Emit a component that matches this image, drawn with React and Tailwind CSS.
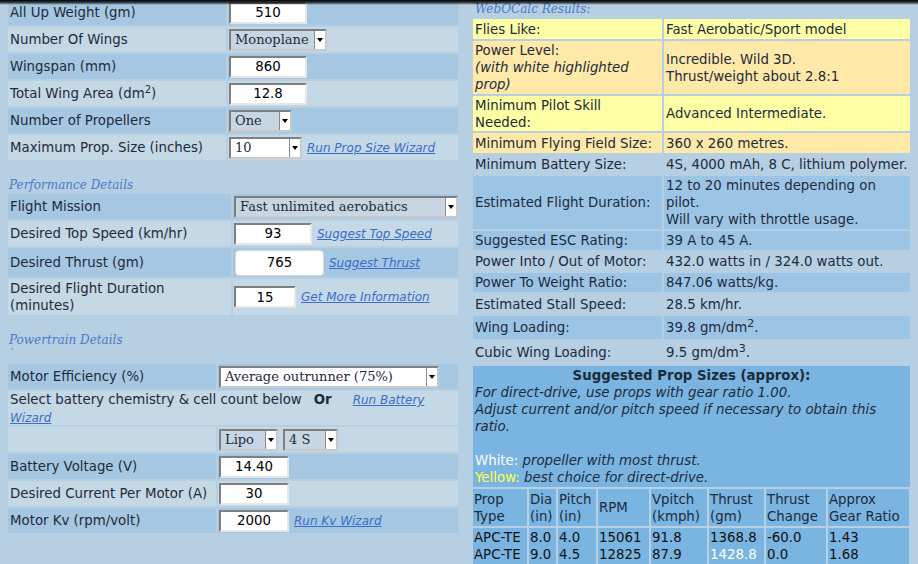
import React from 'react';

const DARK = 'bg-[#a5c7e1]';
const LIGHT = 'bg-[#c4d8e6]';

const Arrow = () => (
    <span className="flex w-[11px] items-center justify-center border-l border-[#8a8a8a] bg-white">
        <span className="h-0 w-0 border-x-[3px] border-t-[4px] border-x-transparent border-t-black" />
    </span>
);

const Select = ({ w, value, white }) => (
    <div className={`flex h-[22px] ${w} shrink-0 border-2 border-t-[#7f7f7f] border-l-[#7f7f7f] border-r-[#c9c9c9] border-b-[#c9c9c9] ${white ? 'bg-white' : 'bg-[#c7d6e2]'}`}>
        <span className="flex-1 truncate pl-[4px] font-['DejaVu_Serif',serif] text-[13px] leading-[18px] text-[#1c2b3b]">{value}</span>
        <Arrow />
    </div>
);

const Field = ({ w, value, soft }) => (
    <input
        readOnly
        value={value}
        className={
            soft
                ? `${w} h-[26px] shrink-0 rounded-[4px] border border-[#d8d8d8] bg-white text-center text-[13.33px] text-black outline-none`
                : `${w} h-[22px] shrink-0 border-2 border-t-[#7f7f7f] border-l-[#7f7f7f] border-r-[#e6e6e6] border-b-[#e6e6e6] bg-white text-center text-[13.33px] text-black outline-none`
        }
    />
);

const Link = ({ children }) => (
    <a href="#" className="ml-[5px] whitespace-nowrap text-[12px] italic text-[#3b6cc8] underline">{children}</a>
);

const Row = ({ cols, bg, h, label, children }) => (
    <div className={`grid ${cols} ${h} gap-[2px]`}>
        <div className={`${bg} flex items-center pl-[2px] leading-[17px]`}>{label}</div>
        <div className={`${bg} flex items-center pl-[1px]`}>{children}</div>
    </div>
);

const Heading = ({ children }) => (
    <div className="h-[18px] pl-[1px] font-['DejaVu_Serif',serif] text-[12px] italic leading-[18px] text-[#4a7ac9]">{children}</div>
);

const results = [
    { bg: 'bg-[#ffffa6]', h: 'h-[20px]', label: 'Flies Like:', value: 'Fast Aerobatic/Sport model' },
    {
        bg: 'bg-[#ffe9a8]',
        h: 'h-[53px]',
        label: (
            <>
                Power Level:<br />
                <i>(with white highlighted prop)</i>
            </>
        ),
        value: (
            <>
                Incredible. Wild 3D.<br />Thrust/weight about 2.8:1
            </>
        ),
    },
    { bg: 'bg-[#ffffa6]', h: 'h-[35px]', label: 'Minimum Pilot Skill Needed:', value: 'Advanced Intermediate.' },
    { bg: 'bg-[#ffe9a8]', h: 'h-[20px]', label: 'Minimum Flying Field Size:', value: '360 x 260 metres.' },
    { bg: '', h: 'h-[19px]', label: 'Minimum Battery Size:', value: '4S, 4000 mAh, 8 C, lithium polymer.' },
    {
        bg: 'bg-[#9cc5e5]',
        h: 'h-[53px]',
        label: 'Estimated Flight Duration:',
        value: (
            <>
                12 to 20 minutes depending on pilot.<br />Will vary with throttle usage.
            </>
        ),
    },
    { bg: 'bg-[#9cc5e5]', h: 'h-[19px]', label: 'Suggested ESC Rating:', value: '39 A to 45 A.' },
    { bg: '', h: 'h-[19px]', label: 'Power Into / Out of Motor:', value: '432.0 watts in / 324.0 watts out.' },
    { bg: 'bg-[#9cc5e5]', h: 'h-[19px]', label: 'Power To Weight Ratio:', value: '847.06 watts/kg.' },
    { bg: '', h: 'h-[20px]', label: 'Estimated Stall Speed:', value: '28.5 km/hr.' },
    {
        bg: 'bg-[#9cc5e5]',
        h: 'h-[23px]',
        label: 'Wing Loading:',
        value: (
            <>
                39.8 gm/dm<sup className="text-[11px]">2</sup>.
            </>
        ),
    },
    {
        bg: '',
        h: 'h-[23px]',
        label: 'Cubic Wing Loading:',
        value: (
            <>
                9.5 gm/dm<sup className="text-[11px]">3</sup>.
            </>
        ),
    },
];

const propHead = [
    ['Prop', 'Type'],
    ['Dia', '(in)'],
    ['Pitch', '(in)'],
    ['RPM'],
    ['Vpitch', '(kmph)'],
    ['Thrust', '(gm)'],
    ['Thrust', 'Change'],
    ['Approx', 'Gear Ratio'],
];

const propRows = [
    ['APC-TE', '8.0', '4.0', '15061', '91.8', '1368.8', '-60.0', '1.43'],
    ['APC-TE', '9.0', '4.5', '12825', '87.9', '1428.8', '0.0', '1.68'],
];

const App = () => {
    return (
        <div className="relative flex h-[564px] w-full overflow-hidden bg-[#b7cfe2] font-['DejaVu_Sans',sans-serif] text-[13.33px] text-[#1c2b3b]">
            <div className="absolute inset-x-0 top-0 h-[5px] bg-gradient-to-b from-black via-black/70 to-transparent" />

            {/* input side */}
            <div className="flex w-[466px] shrink-0 flex-col px-[8px]">
                <div className="flex flex-col gap-[2px]">
                    <Row cols="grid-cols-[218px_230px]" bg={DARK} h="h-[25px]" label="All Up Weight (gm)">
                        <Field w="w-[78px]" value="510" />
                    </Row>
                    <Row cols="grid-cols-[218px_230px]" bg={LIGHT} h="h-[25px]" label="Number Of Wings">
                        <Select w="w-[98px]" value="Monoplane" />
                    </Row>
                    <Row cols="grid-cols-[218px_230px]" bg={DARK} h="h-[25px]" label="Wingspan (mm)">
                        <Field w="w-[78px]" value="860" />
                    </Row>
                    <Row
                        cols="grid-cols-[218px_230px]"
                        bg={LIGHT}
                        h="h-[25px]"
                        label={
                            <span>
                                Total Wing Area (dm<sup className="text-[10px]">2</sup>)
                            </span>
                        }
                    >
                        <Field w="w-[78px]" value="12.8" />
                    </Row>
                    <Row cols="grid-cols-[218px_230px]" bg={DARK} h="h-[25px]" label="Number of Propellers">
                        <Select w="w-[63px]" value="One" />
                    </Row>
                    <Row cols="grid-cols-[218px_230px]" bg={LIGHT} h="h-[25px]" label="Maximum Prop. Size (inches)">
                        <Select w="w-[73px]" value="10" white />
                        <Link>Run Prop Size Wizard</Link>
                    </Row>
                </div>

                <div className="mt-[16px]">
                    <Heading>Performance Details</Heading>
                </div>
                <div className="flex flex-col gap-[2px]">
                    <Row cols="grid-cols-[223px_225px]" bg={DARK} h="h-[25px]" label="Flight Mission">
                        <Select w="w-[224px]" value="Fast unlimited aerobatics" />
                    </Row>
                    <Row cols="grid-cols-[223px_225px]" bg={LIGHT} h="h-[25px]" label="Desired Top Speed (km/hr)">
                        <Field w="w-[78px]" value="93" />
                        <Link>Suggest Top Speed</Link>
                    </Row>
                    <Row cols="grid-cols-[223px_225px]" bg={DARK} h="h-[29px]" label="Desired Thrust (gm)">
                        <span className="ml-[1px] flex items-center">
                            <Field w="w-[89px]" value="765" soft />
                        </span>
                        <Link>Suggest Thrust</Link>
                    </Row>
                    <Row
                        cols="grid-cols-[223px_225px]"
                        bg={LIGHT}
                        h="h-[36px]"
                        label={
                            <span>
                                Desired Flight Duration<br />(minutes)
                            </span>
                        }
                    >
                        <Field w="w-[62px]" value="15" />
                        <Link>Get More Information</Link>
                    </Row>
                </div>

                <div className="mt-[16px]">
                    <Heading>Powertrain Details</Heading>
                    <div className="h-[15px] pl-[2px] font-['DejaVu_Serif',serif] text-[11px] leading-[9px] text-[#4a7ac9]">`</div>
                </div>
                <div className="flex flex-col gap-[2px]">
                    <Row cols="grid-cols-[208px_240px]" bg={DARK} h="h-[25px]" label="Motor Efficiency (%)">
                        <Select w="w-[220px]" value="Average outrunner (75%)" white />
                    </Row>
                    <div className={`${LIGHT} h-[34px] pl-[2px] leading-[17px]`}>
                        Select battery chemistry &amp; cell count below
                        <b className="ml-[12px]">Or</b>
                        <a href="#" className="ml-[21px] text-[12px] italic text-[#3b6cc8] underline">
                            Run Battery
                        </a>
                        <br />
                        <a href="#" className="text-[12px] italic text-[#3b6cc8] underline">
                            Wizard
                        </a>
                    </div>
                    <Row cols="grid-cols-[208px_240px]" bg={LIGHT} h="h-[25px]" label="">
                        <div className="flex gap-[5px]">
                            <Select w="w-[59px]" value="Lipo" />
                            <Select w="w-[55px]" value="4 S" />
                        </div>
                    </Row>
                    <Row cols="grid-cols-[208px_240px]" bg={DARK} h="h-[25px]" label="Battery Voltage (V)">
                        <Field w="w-[70px]" value="14.40" />
                    </Row>
                    <Row cols="grid-cols-[208px_240px]" bg={LIGHT} h="h-[25px]" label="Desired Current Per Motor (A)">
                        <Field w="w-[70px]" value="30" />
                    </Row>
                    <Row cols="grid-cols-[208px_240px]" bg={DARK} h="h-[25px]" label="Motor Kv (rpm/volt)">
                        <Field w="w-[70px]" value="2000" />
                        <Link>Run Kv Wizard</Link>
                    </Row>
                </div>
            </div>

            {/* results side */}
            <div className="ml-[7px] flex w-[437px] shrink-0 flex-col">
                <div className="h-[19px] pl-[2px] font-['DejaVu_Serif',serif] text-[12px] italic leading-[19px] text-[#4a7ac9]">
                    WebOCalc Results:
                </div>
                <div className="flex flex-col gap-[2px]">
                    {results.map((r, i) => (
                        <div key={i} className={`grid grid-cols-[189px_246px] gap-[2px] ${r.h}`}>
                            <div className={`${r.bg} flex items-center px-[2px] leading-[17px]`}>
                                <div>{r.label}</div>
                            </div>
                            <div className={`${r.bg} flex items-center px-[2px] leading-[17px]`}>
                                <div>{r.value}</div>
                            </div>
                        </div>
                    ))}
                </div>

                <div className="mt-[2px] flex-1 bg-[#7ab4e0]">
                    <div className="px-[2px] pt-[1px] leading-[17px]">
                        <div className="text-center font-bold">Suggested Prop Sizes (approx):</div>
                        <div className="italic">
                            For direct-drive, use props with gear ratio 1.00.<br />
                            Adjust current and/or pitch speed if necessary to obtain this ratio.
                        </div>
                        <div className="h-[17px]" />
                        <div>
                            <span className="text-white">White:</span> <i>propeller with most thrust.</i>
                        </div>
                        <div>
                            <span className="text-[#ffff44]">Yellow:</span> <i>best choice for direct-drive.</i>
                        </div>
                    </div>
                    <div className="mt-[1px] grid grid-cols-[54px_27px_38px_51px_56px_55px_60px_81px] gap-[2px] bg-[#b7d0e4] pt-[2px] leading-[17px]">
                        {propHead.map((h, i) => (
                            <div key={i} className="flex h-[37px] items-center bg-[#7ab4e0] px-[1px]">
                                <div>
                                    {h[0]}
                                    {h[1] && <br />}
                                    {h[1]}
                                </div>
                            </div>
                        ))}
                        {propHead.map((h, c) => (
                            <div key={c} className="h-[60px] bg-[#7ab4e0] px-[1px] pt-[1px]">
                                {propRows.map((r, j) => (
                                    <div key={j} className={c === 5 && j === 1 ? 'text-white' : 'text-[#111]'}>
                                        {r[c]}
                                    </div>
                                ))}
                            </div>
                        ))}
                    </div>
                </div>
            </div>
        </div>
    );
};

export default App;
